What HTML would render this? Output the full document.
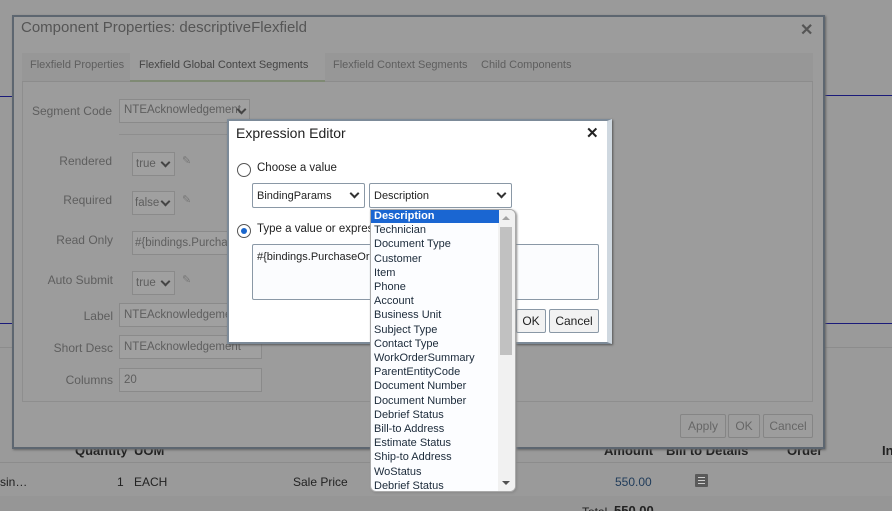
<!DOCTYPE html>
<html><head><meta charset="utf-8"><style>
*{box-sizing:border-box;margin:0;padding:0}
html{width:892px;height:511px;overflow:hidden}
body{width:892px;height:511px;overflow:hidden;background:#9a9a9a;font-family:"Liberation Sans",Arial,sans-serif;font-size:12px;position:relative;color:#222}
.a{position:absolute;white-space:nowrap}
.box{position:absolute;border:1px solid #8a8a8a;background:#a0a0a0}
.btn{position:absolute;border:1px solid #858585;border-radius:2px;background:#9d9d9d;color:#666;font-size:12px;text-align:center;line-height:22px}
.chev{position:absolute;width:7px;height:7px;border-right:2px solid #333;border-bottom:2px solid #333;transform:rotate(45deg)}
.lbl{position:absolute;text-align:right;color:#5e5e5e;font-size:12px;white-space:nowrap}
</style></head><body>
<div class="a" style="left:0;top:96px;width:12px;height:1px;background:#1a1a7a"></div>
<div class="a" style="left:825px;top:95px;width:67px;height:1px;background:#1a1a7a"></div>
<div class="a" style="left:0;top:323px;width:12px;height:1px;background:#1a1a7a"></div>
<div class="a" style="left:825px;top:323px;width:67px;height:1px;background:#1a1a7a"></div>
<div class="a" style="left:825px;top:347px;width:67px;height:1px;background:#8c8c8c"></div>
<div class="a" style="left:0;top:347px;width:12px;height:1px;background:#8c8c8c"></div>
<div class="a" style="left:0;top:462px;width:892px;height:1px;background:#8c8c8c"></div>
<div class="a" style="left:0;top:496px;width:892px;height:15px;background:#969696"></div>
<div class="a" style="left:75px;top:443px;font-size:13px;font-weight:bold;color:#222">Quantity</div>
<div class="a" style="left:134px;top:443px;font-size:13px;font-weight:bold;color:#222">UOM</div>
<div class="a" style="left:604px;top:443px;font-size:13px;font-weight:bold;color:#222">Amount</div>
<div class="a" style="left:666px;top:443px;font-size:13px;font-weight:bold;color:#222">Bill to Details</div>
<div class="a" style="left:787px;top:443px;font-size:13px;font-weight:bold;color:#222">Order</div>
<div class="a" style="left:882px;top:443px;font-size:13px;font-weight:bold;color:#222">In</div>
<div class="a" style="left:0;top:475px;color:#222">sin…</div>
<div class="a" style="left:117px;top:475px;color:#222">1</div>
<div class="a" style="left:134px;top:475px;color:#222">EACH</div>
<div class="a" style="left:293px;top:475px;color:#222">Sale Price</div>
<div class="a" style="left:615px;top:475px;color:#1f3b5a">550.00</div>
<div class="a" style="left:695px;top:474px;width:13px;height:13px;background:#5a5a5a;border-radius:1px"><div style="margin:3px 3px;height:7px;border-top:1px solid #ccc;border-bottom:1px solid #ccc"><div style="margin-top:2px;height:1px;background:#ccc"></div></div></div>
<div class="a" style="left:582px;top:505px;color:#222">Total</div>
<div class="a" style="left:614px;top:503px;font-size:13px;font-weight:bold;color:#222">550.00</div>

<div class="a" style="left:12px;top:15px;width:813px;height:434px;background:#9c9c9c;border:2px solid #5d6670;box-shadow:1px 1px 2px #666"></div>
<div class="a" style="left:21px;top:19px;font-size:15px;color:#555">Component Properties: descriptiveFlexfield</div>
<div class="a" style="left:800px;top:20px;font-size:16px;font-weight:bold;color:#555">✕</div>
<div class="a" style="left:22px;top:53px;width:791px;height:29px;background:#979797;border-bottom:1px solid #8c8c8c"></div>
<div class="a" style="left:30px;top:59px;font-size:11px;color:#5e5e5e">Flexfield Properties</div>
<div class="a" style="left:130px;top:53px;width:195px;height:29px;background:#9c9c9c;border-bottom:2px solid #7f8a74"></div>
<div class="a" style="left:139px;top:59px;font-size:11px;color:#444">Flexfield Global Context Segments</div>
<div class="a" style="left:333px;top:59px;font-size:11px;color:#5e5e5e">Flexfield Context Segments</div>
<div class="a" style="left:481px;top:59px;font-size:11px;color:#5e5e5e">Child Components</div>
<div class="a" style="left:22px;top:82px;width:791px;height:320px;border:1px solid #8e8e8e;border-top:none"></div>

<div class="lbl" style="left:20px;width:92px;top:104px">Segment Code</div>
<div class="box" style="left:119px;top:99px;width:131px;height:24px"></div>
<div class="a" style="left:124px;top:104px;font-size:11.5px;color:#5e5e5e">NTEAcknowledgement</div>
<div class="chev" style="left:238px;top:106px;border-color:#444"></div>
<div class="a" style="left:119px;top:134px;width:110px;height:1px;background:#8e8e8e"></div>

<div class="lbl" style="left:20px;width:92px;top:154px">Rendered</div>
<div class="box" style="left:132px;top:152px;width:43px;height:24px"></div>
<div class="a" style="left:136px;top:158px;font-size:11.5px;color:#5e5e5e">true</div>
<div class="chev" style="left:162px;top:159px;border-color:#444"></div>
<div class="a" style="left:182px;top:154px;color:#777;font-size:11px">✎</div>

<div class="lbl" style="left:20px;width:92px;top:193px">Required</div>
<div class="box" style="left:132px;top:191px;width:43px;height:24px"></div>
<div class="a" style="left:135px;top:197px;font-size:11.5px;color:#5e5e5e">false</div>
<div class="chev" style="left:162px;top:198px;border-color:#444"></div>
<div class="a" style="left:182px;top:193px;color:#777;font-size:11px">✎</div>

<div class="lbl" style="left:20px;width:93px;top:233px">Read Only</div>
<div class="box" style="left:132px;top:231px;width:100px;height:24px"></div>
<div class="a" style="left:135px;top:237px;font-size:11.5px;color:#5e5e5e">#{bindings.Purchas</div>

<div class="lbl" style="left:20px;width:93px;top:273px">Auto Submit</div>
<div class="box" style="left:132px;top:271px;width:43px;height:24px"></div>
<div class="a" style="left:136px;top:277px;font-size:11.5px;color:#5e5e5e">true</div>
<div class="chev" style="left:162px;top:278px;border-color:#444"></div>
<div class="a" style="left:182px;top:273px;color:#777;font-size:11px">✎</div>

<div class="lbl" style="left:20px;width:93px;top:309px">Label</div>
<div class="box" style="left:119px;top:303px;width:143px;height:24px"></div>
<div class="a" style="left:124px;top:309px;font-size:11.5px;color:#5e5e5e">NTEAcknowledgeme</div>
<div class="lbl" style="left:20px;width:93px;top:341px">Short Desc</div>
<div class="box" style="left:119px;top:335px;width:143px;height:24px"></div>
<div class="a" style="left:124px;top:341px;font-size:11.5px;color:#5e5e5e">NTEAcknowledgement</div>
<div class="lbl" style="left:20px;width:93px;top:373px">Columns</div>
<div class="box" style="left:119px;top:368px;width:143px;height:24px"></div>
<div class="a" style="left:124px;top:374px;font-size:11.5px;color:#5e5e5e">20</div>

<div class="btn" style="left:680px;top:414px;width:46px;height:24px">Apply</div>
<div class="btn" style="left:728px;top:414px;width:32px;height:24px">OK</div>
<div class="btn" style="left:763px;top:414px;width:50px;height:24px">Cancel</div>

<div class="a" style="left:227px;top:119px;width:385px;height:225px;background:#fff;border:2px solid #7c8a98;border-right:5px solid #cfd8e0;box-shadow:1px 1px 2px #555"></div>
<div class="a" style="left:236px;top:125px;font-size:14px;color:#222">Expression Editor</div>
<div class="a" style="left:586px;top:124px;font-size:15px;font-weight:bold;color:#222">✕</div>
<div class="a" style="left:237px;top:163px;width:14px;height:14px;border:1px solid #555;border-radius:50%"></div>
<div class="a" style="left:257px;top:162px;font-size:11.5px;color:#222">Choose a value</div>
<div class="a" style="left:252px;top:183px;width:113px;height:25px;border:1px solid #8a98a6;border-radius:2px"></div>
<div class="a" style="left:257px;top:190px;font-size:11px;color:#222">BindingParams</div>
<div class="chev" style="left:351px;top:190px"></div>
<div class="a" style="left:369px;top:183px;width:143px;height:25px;border:1px solid #8a98a6;border-radius:2px"></div>
<div class="a" style="left:374px;top:190px;font-size:11px;color:#222">Description</div>
<div class="chev" style="left:498px;top:190px"></div>
<div class="a" style="left:237px;top:224px;width:14px;height:14px;border:1px solid #555;border-radius:50%"><div style="margin:3px;width:6px;height:6px;border-radius:50%;background:#1a66cc"></div></div>
<div class="a" style="left:257px;top:223px;font-size:11.5px;color:#222">Type a value or express</div>
<div class="a" style="left:252px;top:244px;width:347px;height:56px;border:1px solid #8a98a6;border-radius:2px;background:#fbfcfe"></div>
<div class="a" style="left:257px;top:251px;font-size:11px;color:#222">#{bindings.PurchaseOr</div>
<div class="a" style="left:516px;top:309px;width:30px;height:24px;border:1px solid #8a98a6;border-radius:2px;background:#f2f2f2;text-align:center;line-height:22px;font-size:12px">OK</div>
<div class="a" style="left:549px;top:309px;width:50px;height:24px;border:1px solid #8a98a6;border-radius:2px;background:#f2f2f2;text-align:center;line-height:22px;font-size:12px">Cancel</div>

<div class="a" style="left:370px;top:209px;width:146px;height:283px;background:#fcfdff;border:1px solid #aaa;border-radius:0 6px 6px 6px;overflow:hidden;box-shadow:1px 1px 2px #888">
<div style="position:absolute;right:0;top:0;width:17px;height:100%;background:#f1f1f1"></div>
<div style="position:absolute;right:3px;top:17px;width:12px;height:128px;background:#c1c1c1"></div>
<div style="position:absolute;right:5px;top:6px;border:4px solid transparent;border-bottom:4px solid #a3a3a3;border-top:none"></div>
<div style="position:absolute;right:5px;bottom:6px;border:4px solid transparent;border-top:4px solid #505050;border-bottom:none"></div>
<div style="position:absolute;left:0;top:-1px;width:128px;font-size:11px;line-height:14.2px;color:#1b2a3a">
<div style="background:#1a66d2;color:#fff;font-weight:bold;padding-left:3px">Description</div>
<div style="padding-left:3px">Technician</div>
<div style="padding-left:3px">Document Type</div>
<div style="padding-left:3px">Customer</div>
<div style="padding-left:3px">Item</div>
<div style="padding-left:3px">Phone</div>
<div style="padding-left:3px">Account</div>
<div style="padding-left:3px">Business Unit</div>
<div style="padding-left:3px">Subject Type</div>
<div style="padding-left:3px">Contact Type</div>
<div style="padding-left:3px">WorkOrderSummary</div>
<div style="padding-left:3px">ParentEntityCode</div>
<div style="padding-left:3px">Document Number</div>
<div style="padding-left:3px">Document Number</div>
<div style="padding-left:3px">Debrief Status</div>
<div style="padding-left:3px">Bill-to Address</div>
<div style="padding-left:3px">Estimate Status</div>
<div style="padding-left:3px">Ship-to Address</div>
<div style="padding-left:3px">WoStatus</div>
<div style="padding-left:3px">Debrief Status</div>
</div></div>
</body></html>
